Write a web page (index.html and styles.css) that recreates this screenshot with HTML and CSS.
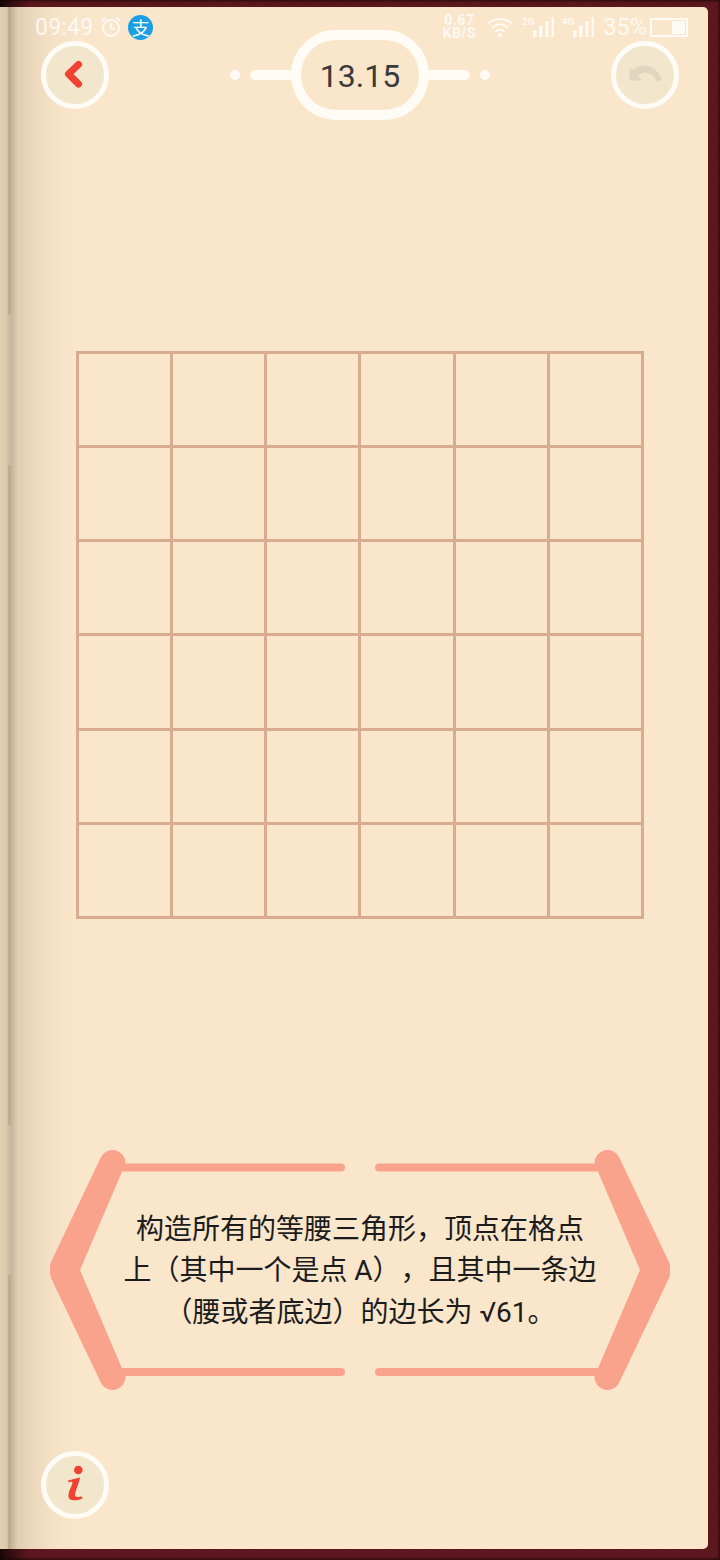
FILE: index.html
```html
<!DOCTYPE html>
<html lang="zh">
<head>
<meta charset="utf-8">
<title>13.15</title>
<link rel="stylesheet" href="styles.css">
</head>
<body>
<div class="frame">
  <main class="paper">
    <div class="spine-mark spine-mark-a"></div>
    <div class="spine-mark spine-mark-b"></div>
    <div class="status">
      <div class="status-left">
        <span class="clock">09:49</span>
        <svg class="alarm" viewBox="0 0 22 22"><circle cx="11" cy="12" r="8" fill="none" stroke="currentColor" stroke-width="2"/><path d="M11 7v5.500h4" fill="none" stroke="currentColor" stroke-width="1.800"/><path d="M1.500 5.500 5.500 1.500M20.500 5.500 16.500 1.500" fill="none" stroke="currentColor" stroke-width="2.200"/></svg>
        <span class="alipay">支</span>
      </div>
      <div class="status-right">
        <span class="speed"><span>0.67</span><span>KB/S</span></span>
        <svg class="wifi" viewBox="0 0 26 20"><g fill="none" stroke="currentColor" stroke-width="2" stroke-linecap="round"><path d="M1 6.500C8 .5 18 .5 25 6.500"/><path d="M5 10.500C10 6.500 16 6.500 21 10.500"/><path d="M9 14C11.500 12.500 14.500 12.500 17 14"/></g><circle cx="13" cy="18" r="2" fill="currentColor"/></svg>
        <span class="signal"><i class="net">2G</i><svg class="bars" viewBox="0 0 21 20"><path d="M0 13h3.500v7H0zM6 8.500h3.500V20H6zM12.500 4h3v16h-3zM18.500 0h2.500v20h-2.500z" fill="currentColor"/></svg></span>
        <span class="signal"><i class="net">4G</i><svg class="bars" viewBox="0 0 21 20"><path d="M0 13h3.500v7H0zM6 8.500h3.500V20H6zM12.500 4h3v16h-3zM18.500 0h2.500v20h-2.500z" fill="currentColor"/></svg></span>
        <span class="percent">35%</span>
        <span class="battery"><span class="battery-fill"></span></span>
      </div>
    </div>

    <header class="top">
      <button class="round" aria-label="back">
        <svg class="icon" viewBox="0 0 58 58"><path d="M32.500 18.500 22.500 28l10 10" fill="none" stroke="#ef4230" stroke-width="7" stroke-linecap="round" stroke-linejoin="round"/></svg>
      </button>
      <div class="level">
        <span class="dot"></span>
        <span class="dash dash-l"></span>
        <span class="pill">13.15</span>
        <span class="dash dash-r"></span>
        <span class="dot"></span>
      </div>
      <button class="round" aria-label="undo">
        <svg class="icon" viewBox="0 0 58 58"><path d="M13.500 21V34.500H27L22 29.500C28 24.500 37 26 41 35.500L46 33.500C41 20 27 15 17 24.500Z" fill="#e0d6c0"/></svg>
      </button>
    </header>

    <section class="board">
      <div class="cell"></div><div class="cell"></div><div class="cell"></div><div class="cell"></div><div class="cell"></div><div class="cell"></div>
      <div class="cell"></div><div class="cell"></div><div class="cell"></div><div class="cell"></div><div class="cell"></div><div class="cell"></div>
      <div class="cell"></div><div class="cell"></div><div class="cell"></div><div class="cell"></div><div class="cell"></div><div class="cell"></div>
      <div class="cell"></div><div class="cell"></div><div class="cell"></div><div class="cell"></div><div class="cell"></div><div class="cell"></div>
      <div class="cell"></div><div class="cell"></div><div class="cell"></div><div class="cell"></div><div class="cell"></div><div class="cell"></div>
      <div class="cell"></div><div class="cell"></div><div class="cell"></div><div class="cell"></div><div class="cell"></div><div class="cell"></div>
    </section>

    <section class="message">
      <svg class="message-frame" viewBox="0 0 620 240">
        <g fill="#f9a38d">
          <path d="M50.500 8A13 13 0 0 1 75.500 13.500L30 120 75.500 226.500A13 13 0 0 1 50.500 232L1 128Q-1.500 120 1 112Z"/>
          <path d="M569.500 8A13 13 0 0 0 544.500 13.500L590 120 544.500 226.500A13 13 0 0 0 569.500 232L619 128Q621.500 120 619 112Z"/>
        </g>
        <path fill="none" stroke="#f9a38d" stroke-width="8" stroke-linecap="round" d="M63 17.500H291M329 17.500H557M63 222H291M329 222H557"/>
      </svg>
      <p class="message-text">构造所有的等腰三角形，顶点在格点<br>上（其中一个是点 A），且其中一条边<br>（腰或者底边）的边长为 √61。</p>
    </section>

    <footer class="bottom">
      <button class="round" aria-label="info">
        <svg class="icon" viewBox="0 0 58 58"><circle cx="32.300" cy="14" r="4.300" fill="#ef4230"/><path d="M22 24.500 34 21.500C33 28 29.500 34 29 39C29 41 31 41.500 36 40.500L36.500 42.500C32 44.500 28.500 44.500 25.500 44C22 43 22 40 23 36C24 32 26.500 29 26.500 26C25 25.500 24 26 22.500 26.500Z" fill="#ef4230"/></svg>
      </button>
    </footer>
  </main>
</div>
</body>
</html>
```
FILE: styles.css
```css
* { box-sizing: border-box; }
html, body { margin: 0; padding: 0; }
body { width: 720px; height: 1560px; overflow: hidden; font-family: Roboto, "Noto Sans CJK SC", sans-serif; }

.frame {
  width: 720px;
  height: 1560px;
  padding: 7px 12px 11px 0;
  box-shadow: inset 0 0 3px 1px rgba(20,5,5,.75);
  background:
    linear-gradient(90deg, rgba(15,5,5,.85) 0, rgba(15,5,5,0) 30px),
    repeating-linear-gradient(135deg, #5f191e 0 2px, #59161b 2px 4px);
}
.paper {
  position: relative;
  height: 100%;
  display: flex;
  flex-direction: column;
  padding-top: 23px;
  border-radius: 0 5px 5px 0;
  background: linear-gradient(90deg, #e3d0b2 0, #dcc8aa 7px, #b8a68f 9px, #c9b69c 12px, #e2cfb2 18px, #eedabf 36px, #f6e3c8 60px, #f9e6cb 80px);
}
.spine-mark { position: absolute; left: 8px; width: 3px; height: 150px; background: rgba(235,225,210,.3); }
.spine-mark-a { top: 308px; }
.spine-mark-b { top: 1118px; }

.status {
  position: absolute;
  top: 5px;
  left: 35px;
  width: 653px;
  height: 30px;
  display: flex;
  justify-content: space-between;
  align-items: center;
  color: rgba(255,255,255,.78);
}
.status-left, .status-right { display: flex; align-items: center; }
.clock { font-size: 23px; letter-spacing: .2px; }
.alarm { width: 22px; height: 22px; margin-left: 7px; }
.alipay {
  width: 25px;
  height: 25px;
  margin-left: 6px;
  border-radius: 50%;
  background: #1a9fe4;
  color: #fff;
  font: 18px/25px "Noto Sans CJK SC", sans-serif;
  text-align: center;
}
.speed { display: flex; flex-direction: column; align-items: center; font-size: 14px; font-weight: 700; line-height: 13px; letter-spacing: .5px; width: 36px; }
.wifi { width: 26px; height: 20px; margin-left: 10px; }
.signal { display: flex; align-items: flex-end; margin-left: 9px; width: 32px; position: relative; height: 20px; }
.net { font-size: 9.500px; font-weight: 700; font-style: normal; line-height: 8px; position: absolute; top: 1px; left: 0; }
.bars { width: 21px; height: 20px; margin-left: 11px; }
.signal + .signal { margin-left: 8px; }
.percent { font-size: 23.500px; margin-left: 9px; }
.battery {
  width: 38px;
  height: 19px;
  margin-left: 3px;
  border: 2px solid currentColor;
  display: flex;
  justify-content: flex-end;
  padding: 1px;
}
.battery-fill { width: 13px; background: currentColor; }

.top {
  display: flex;
  align-items: center;
  justify-content: space-between;
  height: 90px;
  padding: 0 29px 0 41px;
}
.round {
  width: 68px;
  height: 68px;
  padding: 0;
  border: 5px solid #fffcf5;
  border-radius: 50%;
  background: #f2e6cd;
  display: block;
}
.icon { display: block; width: 58px; height: 58px; }
.level { display: flex; align-items: center; }
.dot { width: 10px; height: 10px; border-radius: 50%; background: #fffcf5; }
.dash { width: 46px; height: 10px; background: #fffcf5; }
.dash-l { margin-left: 10px; margin-right: -5px; border-radius: 5px 0 0 5px; }
.dash-r { margin-left: -5px; margin-right: 10px; border-radius: 0 5px 5px 0; }
.pill {
  position: relative;
  width: 138px;
  height: 90px;
  border: 10px solid #fffcf5;
  border-radius: 45px;
  background: #f9e6cb;
  color: #3a3a3a;
  font-size: 32px;
  line-height: 72px;
  text-align: center;
}

.board {
  width: 568px;
  height: 568px;
  margin: 231px 0 0 76px;
  padding: 3px;
  display: grid;
  grid-template-columns: repeat(6, 1fr);
  grid-template-rows: repeat(6, 1fr);
  gap: 3px;
  background: #d7ac8f;
}
.cell { background: #f9e6cb; }

.message {
  position: relative;
  width: 620px;
  height: 240px;
  margin: 231px 0 0 50px;
  padding-top: 2px;
  display: flex;
  align-items: center;
  justify-content: center;
}
.message-frame { position: absolute; inset: 0; width: 620px; height: 240px; }
.message-text {
  position: relative;
  margin: 0;
  font-family: Roboto, "Noto Sans CJK SC", sans-serif;
  font-size: 28px;
  line-height: 41.500px;
  color: #1c1c1c;
  text-align: center;
  white-space: nowrap;
  text-spacing-trim: space-all;
}

.bottom { margin: 61px 0 0 41px; }
```
